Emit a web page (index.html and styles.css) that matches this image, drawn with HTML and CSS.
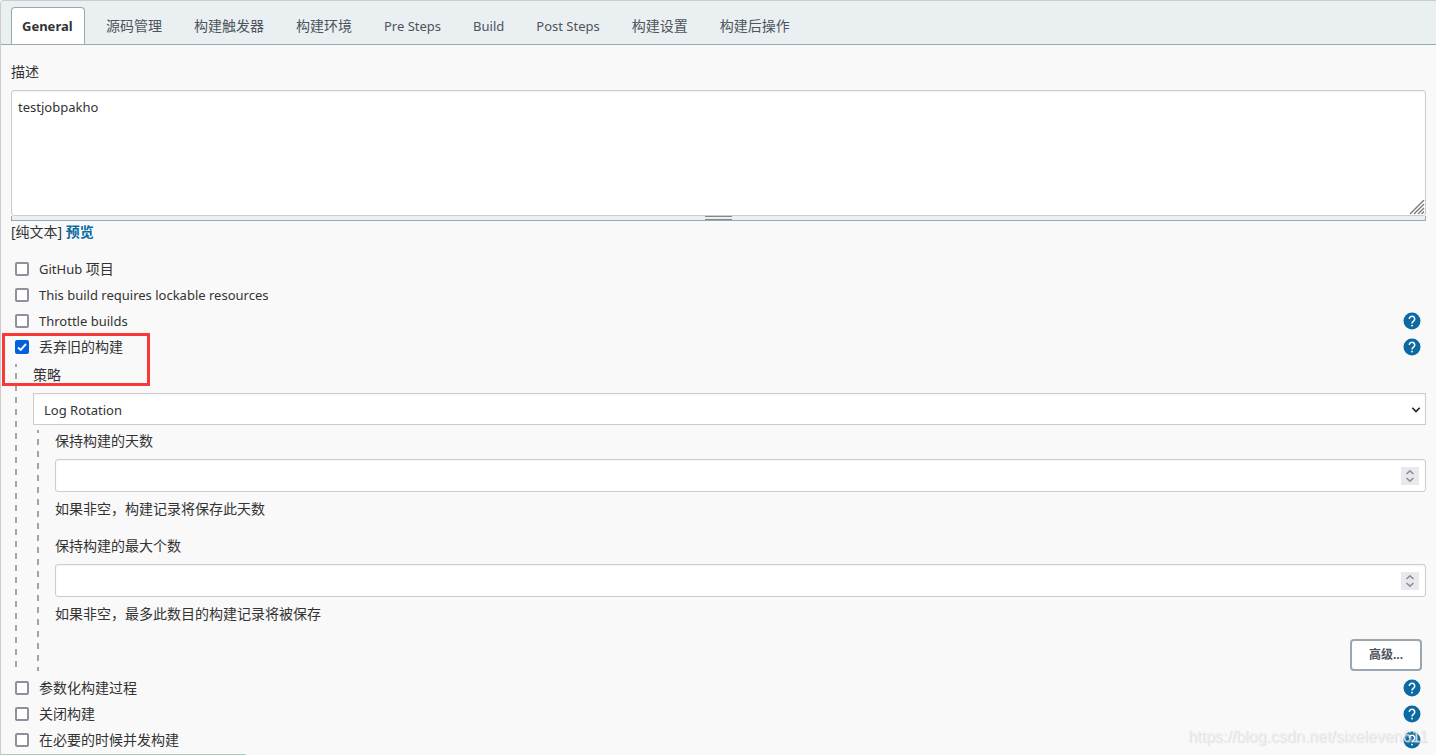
FILE: index.html
```
<!DOCTYPE html>
<html lang="zh-CN">
<head>
<meta charset="utf-8">
<title>General</title>
<link rel="stylesheet" href="styles.css">
</head>
<body>
<svg class="defs" aria-hidden="true">
  <symbol id="help" viewBox="0 0 18 18">
    <circle cx="9" cy="9" r="8.5" fill="#0b6aa2"/>
    <path d="M6.3 6.9a2.7 2.7 0 1 1 4.400 2.100C9.600 9.900 9 10.200 9 11.400" fill="none" stroke="#fff" stroke-width="1.500"/>
    <rect x="8.200" y="12.800" width="1.600" height="1.600" fill="#fff"/>
  </symbol>
  <symbol id="spin" viewBox="0 0 18 18">
    <path d="M0 0h18v18H0z" fill="#e9e9ed"/>
    <path d="M5.5 7 9 3.8 12.5 7M5.5 11 9 14.2 12.5 11" fill="none" stroke="#8f8f9d" stroke-width="1.600"/>
  </symbol>
</svg>
<form class="config">
  <nav class="tabs">
    <a class="tab tab-active latin" href="#general">General</a>
    <a class="tab" href="#scm">源码管理</a>
    <a class="tab" href="#triggers">构建触发器</a>
    <a class="tab" href="#env">构建环境</a>
    <a class="tab latin" href="#pre">Pre Steps</a>
    <a class="tab latin" href="#build">Build</a>
    <a class="tab latin" href="#post">Post Steps</a>
    <a class="tab" href="#settings">构建设置</a>
    <a class="tab" href="#after">构建后操作</a>
  </nav>
  <main class="panel" id="general">
    <label class="label" for="desc">描述</label>
    <div class="editor">
      <textarea class="field area latin" id="desc">testjobpakho</textarea>
      <svg class="grip" viewBox="0 0 15 15" aria-hidden="true"><path d="M0 14 14 0M4 14 14 4M8 14l6-6M11.500 14l2.500-2.500" fill="none" stroke="#777" stroke-width="1.300"/></svg>
    </div>
    <div class="handle"><span class="handle-bar"></span></div>
    <div class="format">[纯文本] <a class="preview" href="#preview">预览</a></div>

    <div class="options">
      <div class="row"><input class="check" type="checkbox" id="c1"><label for="c1"><span class="latin">GitHub</span> 项目</label></div>
      <div class="row"><input class="check" type="checkbox" id="c2"><label class="latin" for="c2">This build requires lockable resources</label></div>
      <div class="row"><input class="check" type="checkbox" id="c3"><label class="latin" for="c3">Throttle builds</label><a class="help" href="#help" aria-label="帮助"><svg class="icon"><use href="#help"/></svg></a></div>
    </div>
    <section class="discard">
      <div class="row"><input class="check" type="checkbox" id="c4" checked><label for="c4">丢弃旧的构建</label><a class="help" href="#help" aria-label="帮助"><svg class="icon"><use href="#help"/></svg></a></div>
      <div class="nested">
        <label class="label" for="strategy">策略</label>
        <div class="control">
          <select class="field select latin" id="strategy"><option>Log Rotation</option></select>
          <svg class="chevron" viewBox="0 0 10 8" aria-hidden="true"><path d="M1.300 1.800 5 5.500 8.700 1.800" fill="none" stroke="#222" stroke-width="1.600"/></svg>
        </div>
        <div class="nested nested-inner">
          <div class="entry">
            <label class="label" for="days">保持构建的天数</label>
            <div class="control"><input class="field number" type="number" id="days"><svg class="spinner" aria-hidden="true"><use href="#spin"/></svg></div>
            <p class="hint">如果非空，构建记录将保存此天数</p>
          </div>
          <div class="entry">
            <label class="label" for="max">保持构建的最大个数</label>
            <div class="control"><input class="field number" type="number" id="max"><svg class="spinner" aria-hidden="true"><use href="#spin"/></svg></div>
            <p class="hint">如果非空，最多此数目的构建记录将被保存</p>
          </div>
          <button class="advanced" type="button">高级...</button>
        </div>
      </div>
      <div class="highlight"></div>
    </section>
    <div class="more">
      <div class="row"><input class="check" type="checkbox" id="c5"><label for="c5">参数化构建过程</label><a class="help" href="#help" aria-label="帮助"><svg class="icon"><use href="#help"/></svg></a></div>
      <div class="row"><input class="check" type="checkbox" id="c6"><label for="c6">关闭构建</label><a class="help" href="#help" aria-label="帮助"><svg class="icon"><use href="#help"/></svg></a></div>
      <div class="row"><input class="check" type="checkbox" id="c7"><label for="c7">在必要的时候并发构建</label><a class="help" href="#help" aria-label="帮助"><svg class="icon"><use href="#help"/></svg></a></div>
    </div>
  </main>
</form>
<div class="watermark">https://blog.csdn.net/sixeleven611</div>
<div class="status"></div>
</body>
</html>
```
FILE: styles.css
```
* { box-sizing: border-box; }
body {
  margin: 0;
  background: #f9f9f9;
  color: #333;
  font: 14px/20px "Noto Sans", "Noto Sans CJK SC", sans-serif;
}
.defs { position: absolute; width: 0; height: 0; }
.latin { font-size: 13px; }
.config {
  min-height: 100vh;
  border: solid #ccc;
  border-width: 1px 0 0 1px;
  border-radius: 4px 0 0 0;
}
.tabs {
  display: flex;
  align-items: flex-end;
  gap: 10px;
  height: 44px;
  padding: 0 10px;
  background: #eaeff2;
  border-bottom: 1px solid #98a7b2;
  border-radius: 3px 0 0 0;
}
.tab {
  height: 37px;
  padding: 8px 10px;
  border: 1px solid transparent;
  border-bottom: 0;
  border-radius: 4px 4px 0 0;
  color: #4d545d;
  text-decoration: none;
  white-space: nowrap;
}
.tab-active {
  min-width: 74px;
  background: #fff;
  border-color: #98a7b2;
  color: #333;
  font-weight: 700;
}
.panel { padding: 17px 10px 0; }
.label { display: block; margin-bottom: 8px; }
.editor, .control { position: relative; display: flex; }
.field {
  width: 100%;
  margin: 0;
  border: 1px solid #ccc;
  border-radius: 3px;
  background: #fff;
  color: #333;
  font-family: inherit;
  box-shadow: inset 0 1px 2px #0000000d;
}
.area {
  height: 126px;
  padding: 6px;
  line-height: 20px;
  resize: none;
}
.grip { position: absolute; right: 1px; bottom: 1px; width: 15px; height: 15px; }
.handle {
  display: flex;
  justify-content: center;
  height: 5px;
  background: #eaeff2;
  border: solid #98a7b2;
  border-width: 0 1px 1px;
}
.handle-bar { width: 27px; height: 4px; border: solid #888; border-width: 1px 0; }
.format { margin-top: 1px; }
.preview { color: #0b6aa2; font-weight: 700; text-decoration: none; }
.options { margin-top: 14px; }
.row {
  display: flex;
  align-items: center;
  gap: 10px;
  height: 26px;
  padding: 0 5px 0 4px;
}
.check {
  appearance: none;
  width: 14px;
  height: 14px;
  margin: 0;
  border: 2px solid #8f8f9d;
  border-radius: 2px;
  background: #fff;
}
.check:checked {
  border-color: #0060df;
  background: #0060df url("data:image/svg+xml,%3Csvg xmlns='http://www.w3.org/2000/svg' viewBox='0 0 10 10'%3E%3Cpath d='M1 5.500 3.700 8 9 2' fill='none' stroke='white' stroke-width='1.900'/%3E%3C/svg%3E") center / 10px;
}
.help { display: flex; margin-left: auto; }
.icon { width: 18px; height: 18px; }
.discard { position: relative; }
.nested {
  margin: 4px 0 0 4px;
  padding: 1px 0 0 18px;
  background: repeating-linear-gradient(#a5a5a5 0 3px, transparent 3px 9px, #a5a5a5 9px 12px) left top / 2px 100% no-repeat;
}
.nested-inner { margin-top: 5px; }
.control .select {
  appearance: none;
  height: 32px;
  padding: 1px 10px 0;
  border-radius: 0;
}
.chevron { position: absolute; right: 5px; top: 13px; width: 10px; height: 8px; pointer-events: none; }
.number { height: 33px; padding: 0 6px; appearance: textfield; }
.spinner { position: absolute; right: 7px; top: 8px; width: 18px; height: 18px; pointer-events: none; }
.hint { margin: 7px 0 0; }
.entry + .entry { margin-top: 17px; }
.advanced {
  display: block;
  width: 72px;
  height: 32px;
  margin: 15px 4px 0 auto;
  padding: 0;
  border: 2px solid #98a7b2;
  border-radius: 4px;
  background: #fff;
  color: #4d545d;
  font: 700 12px/20px "Noto Sans", "Noto Sans CJK SC", sans-serif;
}
.highlight {
  position: absolute;
  left: -9px;
  top: -1px;
  width: 148px;
  height: 53px;
  border: 3px solid #fb3838;
  pointer-events: none;
}
.more { margin-top: 4px; }
.watermark {
  position: fixed;
  right: 8px;
  bottom: 8px;
  color: #ececeecc;
  font: 16px/20px "Liberation Sans", sans-serif;
  text-shadow: 1px 1px 1px #cfcfcf99;
  pointer-events: none;
}
.status {
  position: fixed;
  left: 0;
  bottom: 0;
  width: 246px;
  height: 1px;
  border-radius: 0 4px 0 0;
  background: #a9cdb9;
}
```
